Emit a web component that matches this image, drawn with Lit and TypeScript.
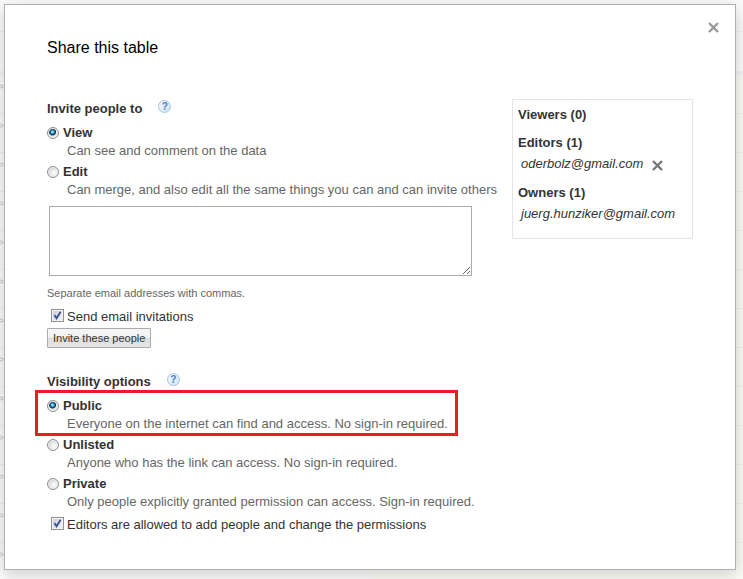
import { LitElement, html, css, svg } from "lit";
import { customElement, property, state } from "lit/decorators.js";

interface Choice {
  id: string;
  title: string;
  note: string;
  marked?: boolean;
}

const ROLES: Choice[] = [
  { id: "view", title: "View", note: "Can see and comment on the data" },
  { id: "edit", title: "Edit", note: "Can merge, and also edit all the same things you can and can invite others" },
];

const VISIBILITY: Choice[] = [
  {
    id: "public",
    title: "Public",
    note: "Everyone on the internet can find and access. No sign-in required.",
    marked: true,
  },
  { id: "unlisted", title: "Unlisted", note: "Anyone who has the link can access. No sign-in required." },
  { id: "private", title: "Private", note: "Only people explicitly granted permission can access. Sign-in required." },
];

const PEOPLE = [
  { group: "Viewers", members: [] as string[], removable: false },
  { group: "Editors", members: ["oderbolz@gmail.com"], removable: true },
  { group: "Owners", members: ["juerg.hunziker@gmail.com"], removable: false },
];

const cross = html`<svg width="11" height="11" viewBox="0 0 11 11" aria-hidden="true">
  <path d="M1 1L10 10M10 1L1 10" stroke="currentColor" stroke-width="2.4" fill="none" />
</svg>`;

@customElement("help-button")
export class HelpButton extends LitElement {
  @property() topic = "";

  static styles = css`
    :host {
      display: block;
      height: 18px;
    }
    .help {
      display: block;
      box-sizing: border-box;
      width: 13px;
      height: 13px;
      padding: 0;
      border: 1px solid #a9c4de;
      border-radius: 50%;
      background: linear-gradient(135deg, #f4faff, #cfe3f5);
      color: #4a7cc0;
      font: bold 10px/11px "Liberation Sans", Arial, sans-serif;
      text-align: center;
      cursor: pointer;
    }
  `;

  render() {
    return html`<button class="help" type="button" aria-label="Help: ${this.topic}">?</button>`;
  }
}

@customElement("choice-list")
export class ChoiceList extends LitElement {
  @property() name = "";
  @property() value = "";
  @property({ attribute: false }) choices: Choice[] = [];

  static styles = css`
    :host {
      display: flex;
      flex-direction: column;
      align-items: flex-start;
      gap: 3px;
    }
    .choice {
      display: grid;
      grid-template-columns: 12px auto;
      column-gap: 4px;
      align-items: center;
      position: relative;
      line-height: 18px;
    }
    .marked::after {
      content: "";
      position: absolute;
      inset: -7px -10px -3px -12px;
      border: 3px solid #ed1c24;
      pointer-events: none;
    }
    .radio {
      appearance: none;
      box-sizing: border-box;
      width: 12px;
      height: 12px;
      margin: 0;
      border: 1px solid #8e8f8f;
      border-radius: 50%;
      background: radial-gradient(circle at 60% 60%, #f6f6f6 20%, #c9ccd0 75%);
      box-shadow: inset 0 0 0 1px #f4f4f4;
    }
    .radio:checked {
      background: radial-gradient(circle at 45% 40%, #7fd4f5 0 1px, #1c6fa6 2px, #0d2f4a 3px, #e6e8ea 4px);
    }
    .title {
      color: #333;
      font-weight: bold;
    }
    .note {
      grid-column: 1 / -1;
      margin: 0 0 0 20px;
      color: #666;
    }
  `;

  render() {
    return this.choices.map(
      (c) => html`<div class="choice ${c.marked ? "marked" : ""}">
        <input
          class="radio"
          type="radio"
          id=${c.id}
          name=${this.name}
          aria-describedby="${c.id}-note"
          .checked=${c.id === this.value}
          @change=${() => (this.value = c.id)}
        />
        <label class="title" for=${c.id}>${c.title}</label>
        <p class="note" id="${c.id}-note">${c.note}</p>
      </div>`,
    );
  }
}

@customElement("people-panel")
export class PeoplePanel extends LitElement {
  static styles = css`
    :host {
      display: block;
      box-sizing: border-box;
      border: 1px solid #e5e5e5;
      padding: 5px 5px 13px;
    }
    .group {
      margin: 0 0 8px;
      line-height: 20px;
    }
    .group:last-child {
      margin: 0;
    }
    .name {
      margin: 0;
      color: #333;
      font-size: 13px;
      font-weight: bold;
    }
    .people {
      margin: 0;
      padding: 0 0 0 3px;
      list-style: none;
    }
    .person {
      display: flex;
      align-items: center;
      gap: 9px;
      color: #333;
      font-style: italic;
      line-height: 22px;
    }
    .remove {
      display: flex;
      padding: 2px 0 0;
      border: 0;
      background: none;
      color: #777;
      cursor: pointer;
    }
  `;

  render() {
    return PEOPLE.map(
      (g) => html`<section class="group">
        <h3 class="name">${g.group} (${g.members.length})</h3>
        <ul class="people">
          ${g.members.map(
            (m) => html`<li class="person">
              <span>${m}</span>
              ${g.removable ? html`<button class="remove" type="button" aria-label="Remove ${m}">${cross}</button>` : ""}
            </li>`,
          )}
        </ul>
      </section>`,
    );
  }
}

@customElement("tick-box")
export class TickBox extends LitElement {
  @property() text = "";
  @state() private on = true;

  static styles = css`
    :host {
      display: block;
      padding-left: 4px;
    }
    .row {
      display: flex;
      align-items: center;
      gap: 3px;
      width: fit-content;
      height: 18px;
      color: #333;
      line-height: 18px;
    }
    .cell {
      display: grid;
      margin-bottom: 4px;
    }
    .box,
    .tick {
      grid-area: 1 / 1;
    }
    .box {
      appearance: none;
      box-sizing: border-box;
      width: 13px;
      height: 13px;
      margin: 0;
      border: 1px solid #8e8f8f;
      background: linear-gradient(135deg, #c9ced6, #f6f6f6);
      box-shadow: inset 0 0 0 1px #f4f4f4;
    }
    .tick {
      pointer-events: none;
    }
  `;

  render() {
    return html`<label class="row">
      <span class="cell">
        <input
          class="box"
          type="checkbox"
          .checked=${this.on}
          @change=${(e: Event) => (this.on = (e.target as HTMLInputElement).checked)}
        />
        <svg class="tick" width="13" height="13" viewBox="0 0 13 13" aria-hidden="true">
          ${this.on ? svg`<path d="M3.4 6.2L5.6 9.2L9.6 2.8" fill="none" stroke="#3f5599" stroke-width="2" />` : ""}
        </svg>
      </span>
      <span>${this.text}</span>
    </label>`;
  }
}

@customElement("app-root")
export class AppRoot extends LitElement {
  static styles = css`
    :host {
      display: flow-root;
      position: relative;
      min-height: 100vh;
      background: #fcfcfc;
      color: #333;
      font: 13px/18px "Liberation Sans", Arial, sans-serif;
    }
    .sheet {
      position: absolute;
      inset: 0;
      overflow: hidden;
      background: linear-gradient(90deg, #fcfcfc 50%, #fcfcf7 50%);
    }
    .bar {
      box-sizing: border-box;
      height: 32px;
      border-bottom: 1px solid #f2f2f2;
      background: #fcfcfc;
    }
    .head {
      box-sizing: border-box;
      height: 43px;
      border-bottom: 4px solid #f4f4f4;
      background: #fcfcfc;
    }
    .line {
      box-sizing: border-box;
      height: 39px;
      padding-top: 9px;
      border-bottom: 1px solid #f1f1f1;
    }
    .link {
      display: block;
    }
    .dialog {
      position: relative;
      margin: 4px 7px 9px 4px;
      padding: 33px 42px 35px;
      border: 1px solid #b0b0b0;
      background: #fff;
      box-shadow: 0 4px 16px rgba(0, 0, 0, 0.2);
    }
    .title {
      margin: 0 0 41px;
      color: #000;
      font-size: 16px;
      font-weight: normal;
      line-height: 20px;
    }
    .close {
      display: flex;
      position: absolute;
      top: 17px;
      right: 16px;
      padding: 0;
      border: 0;
      background: none;
      color: #999;
      cursor: pointer;
    }
    .body {
      display: grid;
      grid-template-columns: 1fr 181px;
      gap: 12px;
      align-items: start;
    }
    .form {
      padding-top: 1px;
    }
    .heading {
      display: flex;
      gap: 16px;
      margin-bottom: 6px;
    }
    .heading-text {
      margin: 0;
      font-size: 13px;
      font-weight: bold;
    }
    .emails {
      display: block;
      box-sizing: border-box;
      width: calc(100% - 30px);
      height: 70px;
      margin: 7px 0 9px 2px;
      border: 1px solid #aaa;
      background: #fff;
      font: inherit;
    }
    .hint {
      display: block;
      margin-bottom: 7px;
      color: #666;
      font-size: 11px;
      line-height: 16px;
    }
    .invite {
      display: block;
      height: 20px;
      margin: 2px 0 25px;
      padding: 0 5px;
      border: 1px solid #aaa;
      border-radius: 1px;
      background: linear-gradient(#f4f4f4 45%, #dcdcdc 50%, #e6e6e6);
      color: #333;
      font: 11px/18px "Liberation Sans", Arial, sans-serif;
      cursor: pointer;
    }
    .permissions {
      margin-top: 5px;
    }
  `;

  render() {
    return html`
      <div class="sheet" aria-hidden="true">
        <div class="bar"></div>
        <div class="head"></div>
        ${Array.from(
          { length: 13 },
          () => html`<div class="line">
            <svg class="link" width="4" height="5" viewBox="0 0 4 5">
              <ellipse cx="0.5" cy="2.5" rx="2.5" ry="1.4" fill="none" stroke="#c4c4c4" />
            </svg>
          </div>`,
        )}
      </div>
      <div class="dialog" role="dialog" aria-labelledby="title">
        <h1 class="title" id="title">Share this table</h1>
        <button class="close" type="button" aria-label="Close">${cross}</button>
        <div class="body">
          <form class="form">
            <div class="heading">
              <h2 class="heading-text">Invite people to</h2>
              <help-button topic="Invite people to"></help-button>
            </div>
            <choice-list name="role" value="view" .choices=${ROLES}></choice-list>
            <textarea class="emails" id="emails"></textarea>
            <label class="hint" for="emails">Separate email addresses with commas.</label>
            <tick-box text="Send email invitations"></tick-box>
            <button class="invite" type="button">Invite these people</button>
            <div class="heading">
              <h2 class="heading-text">Visibility options</h2>
              <help-button topic="Visibility options"></help-button>
            </div>
            <choice-list name="visibility" value="public" .choices=${VISIBILITY}></choice-list>
            <tick-box class="permissions" text="Editors are allowed to add people and change the permissions"></tick-box>
          </form>
          <people-panel></people-panel>
        </div>
      </div>
    `;
  }
}
